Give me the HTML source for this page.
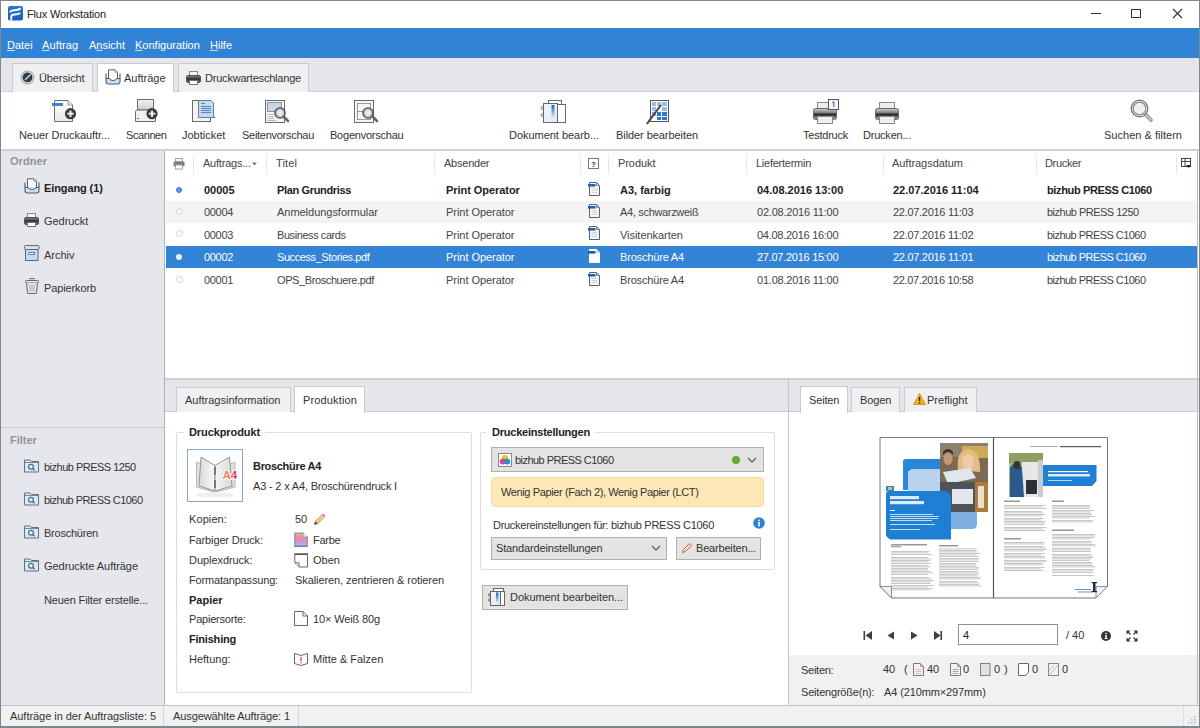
<!DOCTYPE html>
<html><head><meta charset="utf-8">
<style>
*{box-sizing:border-box;margin:0;padding:0}
html,body{width:1200px;height:728px;overflow:hidden;background:#fff}
body{font-family:"Liberation Sans",sans-serif;font-size:11px;color:#333;position:relative}
.a{position:absolute}
.t{position:absolute;white-space:nowrap;line-height:14px}
u{text-decoration:underline;text-underline-offset:1px;text-decoration-color:rgba(255,255,255,0.75)}
</style></head><body>
<!-- window border -->
<div class="a" style="left:0;top:0;width:1200px;height:728px;border:1px solid #7d8a8a;z-index:50;pointer-events:none"></div>

<!-- title bar -->
<div class="a" style="left:0;top:0;width:1200px;height:28px;background:#fff"></div>
<svg class="a" style="left:8px;top:6px" width="15" height="15" viewBox="0 0 15 15"><defs><linearGradient id="lg" x1="0" y1="0" x2="0" y2="1"><stop offset="0" stop-color="#2a78d2"/><stop offset="1" stop-color="#1a5cb4"/></linearGradient></defs><rect x="0" y="0" width="15" height="14.5" rx="2" fill="url(#lg)"/><path d="M2 6.3 Q3 4.2 6 4.3 Q9.5 4.5 12.8 2.4" stroke="#fff" stroke-width="1.9" fill="none"/><path d="M3.3 14.5 V10.5 Q3.6 8.4 6.6 8.5 Q9.8 8.6 12.3 7" stroke="#fff" stroke-width="1.9" fill="none"/></svg>
<div class="t" style="left:27px;top:7px;font-size:11px;color:#222;letter-spacing:-0.17px">Flux Workstation</div>
<div class="a" style="left:1091px;top:13px;width:10px;height:1px;background:#333"></div>
<div class="a" style="left:1131px;top:9px;width:10px;height:9px;border:1px solid #333"></div>
<svg class="a" style="left:1172px;top:8px" width="11" height="11"><path d="M1 1L10 10M10 1L1 10" stroke="#333" stroke-width="1.1"/></svg>

<!-- menu bar -->
<div class="a" style="left:0;top:28px;width:1200px;height:30px;background:#3183d5"></div>
<div class="t" style="left:7px;top:38px;font-size:11px;color:#fff;letter-spacing:-0.021px"><u>D</u>atei</div>
<div class="t" style="left:42px;top:38px;font-size:11px;color:#fff;letter-spacing:0.117px"><u>A</u>uftrag</div>
<div class="t" style="left:89px;top:38px;font-size:11px;color:#fff;letter-spacing:-0.013px">A<u>n</u>sicht</div>
<div class="t" style="left:135px;top:38px;font-size:11px;color:#fff"><u>K</u>onfiguration</div>
<div class="t" style="left:210px;top:38px;font-size:11px;color:#fff"><u>H</u>ilfe</div>

<!-- tab strip -->
<div class="a" style="left:0;top:58px;width:1200px;height:34px;background:#e5e6ea;border-bottom:1px solid #cfd1d6"></div>

<!-- top tabs -->
<div class="a" style="left:12px;top:63px;width:81px;height:29px;background:#f0f0f2;border:1px solid #c9cbd0;border-bottom:none"></div>
<div class="a" style="left:97px;top:63px;width:77px;height:30px;background:#fff;border:1px solid #c9cbd0;border-bottom:none"></div>
<div class="a" style="left:178px;top:63px;width:131px;height:29px;background:#f0f0f2;border:1px solid #c9cbd0;border-bottom:none"></div>
<svg class="a" style="left:20px;top:70px" width="15" height="15" viewBox="0 0 15 15"><circle cx="7.5" cy="7.5" r="7" fill="#a3a7ac"/><circle cx="7.5" cy="7.5" r="6" fill="#e9eaec"/><circle cx="7.5" cy="7.5" r="5" fill="#323c46"/><path d="M5.5 9.5 L10 5" stroke="#c9d3dc" stroke-width="1.5" stroke-linecap="round"/></svg>
<div class="t" style="left:39px;top:71px;color:#333;letter-spacing:-0.108px">Übersicht</div>
<svg class="a" style="left:105px;top:69px" width="16" height="16" viewBox="0 0 16 16"><path d="M1.5 9.5 H4.5 Q5 11.5 8 11.5 Q11 11.5 11.5 9.5 H14.5 V12.5 Q14.5 14.5 12.5 14.5 H3.5 Q1.5 14.5 1.5 12.5Z" fill="#c6def2"/><path d="M3.5 9.5 V0.8 H10 L12.5 3.3 V9.5" fill="#fafafa" stroke="#56606b"/><path d="M10 0.8 V3.3 H12.5" fill="none" stroke="#8a939c" stroke-width="0.8"/><path d="M1 4.5 V12.5 Q1 15 3.5 15 H12.5 Q15 15 15 12.5 V4.5" fill="none" stroke="#4f5a66" stroke-width="1.1"/><path d="M1 9.5 H4.5 Q5 11.5 8 11.5 Q11 11.5 11.5 9.5 H15" fill="none" stroke="#4f5a66"/></svg>
<div class="t" style="left:124px;top:71px;color:#333;letter-spacing:-0.012px">Aufträge</div>
<svg class="a" style="left:186px;top:71px" width="15" height="14" viewBox="0 0 15 14"><rect x="3.5" y="0.5" width="8" height="5" fill="#f4f4f4" stroke="#8a8a8a"/><rect x="0.5" y="4.5" width="14" height="7" rx="1.5" fill="url(#pb)" stroke="#555"/><rect x="3.5" y="9.5" width="8" height="4" fill="#fff" stroke="#777"/></svg>
<div class="t" style="left:205px;top:71px;color:#333;letter-spacing:-0.203px">Druckwarteschlange</div>

<!-- toolbar -->
<div class="a" style="left:0;top:92px;width:1200px;height:57px;background:#fff"></div>
<div class="a" style="left:0;top:149px;width:1200px;height:2px;background:#cdd0d5"></div>
<div class="t" style="left:19px;top:128px;color:#333;letter-spacing:-0.07px">Neuer Druckauftr...</div>
<div class="t" style="left:126px;top:128px;color:#333;letter-spacing:-0.42px">Scannen</div>
<div class="t" style="left:182px;top:128px;color:#333">Jobticket</div>
<div class="t" style="left:242px;top:128px;color:#333;letter-spacing:-0.273px">Seitenvorschau</div>
<div class="t" style="left:330px;top:128px;color:#333;letter-spacing:-0.227px">Bogenvorschau</div>
<div class="t" style="left:509px;top:128px;color:#333;letter-spacing:-0.029px">Dokument bearb...</div>
<div class="t" style="left:616px;top:128px;color:#333;letter-spacing:-0.069px">Bilder bearbeiten</div>
<div class="t" style="left:803px;top:128px;color:#333;letter-spacing:-0.231px">Testdruck</div>
<div class="t" style="left:863px;top:128px;color:#333;letter-spacing:-0.214px">Drucken...</div>
<div class="t" style="left:1104px;top:128px;color:#333;letter-spacing:0.021px">Suchen &amp; filtern</div>

<!-- toolbar icons -->
<svg class="a" style="left:50px;top:98px" width="28" height="26" viewBox="0 0 28 26">
<defs><linearGradient id="gd" x1="0" y1="0" x2="0" y2="1"><stop offset="0" stop-color="#fff"/><stop offset="1" stop-color="#e8e8e8"/></linearGradient></defs>
<path d="M4.5 2.5 H18 L22.5 7 V23.5 H4.5 Z" fill="url(#gd)" stroke="#6b6b6b"/>
<path d="M18 2.5 V7 H22.5" fill="#eee" stroke="#999"/>
<rect x="2" y="5" width="11" height="3" fill="#3a86d4"/>
<circle cx="20.5" cy="15.7" r="5.6" fill="#3d3d3d"/>
<path d="M20.5 12.5 V19 M17.3 15.7 H23.7" stroke="#fff" stroke-width="1.8"/>
</svg>
<svg class="a" style="left:134px;top:98px" width="26" height="26" viewBox="0 0 26 26">
<defs><linearGradient id="gs" x1="0" y1="0" x2="0" y2="1"><stop offset="0" stop-color="#f4f4f4"/><stop offset="1" stop-color="#c9ccd0"/></linearGradient></defs>
<path d="M3.5 1.5 H19.5 V12 H3.5 Z" fill="url(#gs)" stroke="#6b6b6b"/>
<path d="M1.5 13.5 Q1.5 12 3 12 H20 Q21.5 12 21.5 13.5 V23.5 H1.5 Z" fill="#f2f2f2" stroke="#6b6b6b"/>
<rect x="3" y="20" width="2" height="1" fill="#666"/>
<circle cx="18" cy="15.7" r="5.6" fill="#3d3d3d"/>
<path d="M18 12.5 V19 M14.8 15.7 H21.2" stroke="#fff" stroke-width="1.8"/>
</svg>
<svg class="a" style="left:190px;top:98px" width="27" height="26" viewBox="0 0 27 26">
<rect x="2.5" y="2.5" width="18" height="21" fill="#f4f4f4" stroke="#6b6b6b"/>
<path d="M8.5 2.5 H21 L23.5 5 V18 L25 19.5 H8.5 Z" fill="#c4daf0" stroke="#6b7d90"/>
<path d="M11 5.5 H15 M11 8.5 H21 M11 10.5 H21 M11 12.5 H21 M11 14.5 H21" stroke="#3d6fae" stroke-width="0.8"/>
</svg>
<svg class="a" style="left:264px;top:98px" width="26" height="26" viewBox="0 0 26 26">
<rect x="1.5" y="2.5" width="19" height="22" fill="#f6f6f6" stroke="#6b6b6b"/>
<rect x="3.5" y="4.5" width="14" height="9" fill="#c8d6e6" stroke="#8a9099"/>
<path d="M3.5 16.5 H10 M3.5 18.5 H10 M3.5 20.5 H10 M3.5 22.5 H12" stroke="#aaa" stroke-width="0.8"/>
<line x1="19" y1="18" x2="24" y2="23" stroke="#666" stroke-width="2.6" stroke-linecap="round"/>
<circle cx="16" cy="15" r="5" fill="#e9eef3" stroke="#555" stroke-width="1.6"/><circle cx="16" cy="15" r="3.3" fill="none" stroke="#aab" stroke-width="0.8"/>
</svg>
<svg class="a" style="left:353px;top:98px" width="26" height="26" viewBox="0 0 26 26">
<rect x="1.5" y="2.5" width="19" height="22" fill="#f6f6f6" stroke="#6b6b6b"/>
<rect x="4.5" y="5.5" width="13" height="16" fill="none" stroke="#999"/>
<line x1="4.5" y1="13.5" x2="17.5" y2="13.5" stroke="#999"/>
<line x1="19" y1="18" x2="24" y2="23" stroke="#666" stroke-width="2.6" stroke-linecap="round"/>
<circle cx="15" cy="15" r="5" fill="#e9eef3" stroke="#555" stroke-width="1.6"/><circle cx="15" cy="15" r="3.3" fill="none" stroke="#aab" stroke-width="0.8"/>
</svg>
<svg class="a" style="left:538px;top:98px" width="30" height="26" viewBox="0 0 30 26"><rect x="10.5" y="2.5" width="13" height="18" fill="#fff" stroke="#666"/><rect x="19.5" y="6.5" width="8" height="18" fill="#fff" stroke="#666"/><rect x="5.5" y="5.5" width="14" height="19" fill="url(#dpg)" stroke="#666"/><path d="M5.5 8.5 Q3 8.5 3 10 Q3 11.5 5.5 11.5 M5.5 15.5 Q3 15.5 3 17 Q3 18.5 5.5 18.5" fill="none" stroke="#777"/><rect x="13.5" y="7" width="3" height="12" fill="url(#dbg)"/></svg>
<svg class="a" style="left:644px;top:98px" width="28" height="28" viewBox="0 0 28 28">
<rect x="6.5" y="2.5" width="18" height="21" fill="#fff" stroke="#555"/>
<g fill="#9bbce0"><rect x="8" y="4" width="4" height="4"/><rect x="13" y="4" width="4" height="4"/><rect x="18" y="4" width="5" height="4"/><rect x="8" y="9" width="4" height="4"/><rect x="18" y="9" width="5" height="4"/></g>
<g fill="#2f78d0"><rect x="13" y="14" width="4" height="4"/><rect x="18" y="14" width="5" height="4"/><rect x="13" y="19" width="4" height="3"/><rect x="18" y="19" width="5" height="3"/><rect x="8" y="14" width="4" height="4" fill="#7aa6d8"/></g>
<path d="M3 26 L5 23 L17 7" stroke="#444" stroke-width="2" fill="none"/>
</svg>
<svg class="a" style="left:812px;top:98px" width="28" height="27" viewBox="0 0 28 27">
<defs><linearGradient id="gp" x1="0" y1="0" x2="0" y2="1"><stop offset="0" stop-color="#d0d0d0"/><stop offset="0.35" stop-color="#8a8a8a"/><stop offset="0.55" stop-color="#262626"/><stop offset="0.75" stop-color="#6a6a6a"/><stop offset="1" stop-color="#b0b0b0"/></linearGradient></defs>
<rect x="5.5" y="4.5" width="15" height="8" fill="#eee" stroke="#888"/>
<rect x="1.5" y="10.5" width="23" height="11" rx="2" fill="url(#gp)" stroke="#666"/>
<rect x="5.5" y="18.5" width="15" height="7" fill="#eee" stroke="#888"/>
<rect x="16.5" y="1.5" width="10" height="10" fill="#f3f7fb" stroke="#555"/>
<path d="M20.3 4.6 L21.8 3.6 V9.2" stroke="#2d5f9a" stroke-width="1" fill="none"/>
</svg>
<svg class="a" style="left:874px;top:98px" width="28" height="27" viewBox="0 0 28 27">
<rect x="5.5" y="4.5" width="15" height="8" fill="#eee" stroke="#888"/>
<rect x="1.5" y="10.5" width="23" height="11" rx="2" fill="url(#gp)" stroke="#666"/>
<rect x="5.5" y="18.5" width="15" height="7" fill="#eee" stroke="#888"/>
</svg>
<svg class="a" style="left:1128px;top:96px" width="26" height="28" viewBox="0 0 26 28">
<line x1="16.5" y1="17.5" x2="23" y2="24" stroke="#777" stroke-width="3.4" stroke-linecap="round"/>
<line x1="16.5" y1="17.5" x2="23" y2="24" stroke="#d9e1ea" stroke-width="1.6" stroke-linecap="round"/>
<circle cx="11.5" cy="12.5" r="8.3" fill="#f1f4f8" stroke="#777" stroke-width="1.3"/>
<circle cx="11.5" cy="12.5" r="6.3" fill="#eef2f6" stroke="#888" stroke-width="1.2"/>
</svg>

<!-- sidebar -->
<div class="a" style="left:0;top:151px;width:165px;height:554px;background:#e6e7ec;border-right:1px solid #aeb2b9"></div>
<div class="a" style="left:0;top:427px;width:164px;height:1px;background:#c5c8ce"></div>
<div class="t" style="left:10px;top:154px;color:#8f959e;font-weight:bold;letter-spacing:0.052px">Ordner</div>
<svg class="a" style="left:24px;top:178px" width="16" height="16" viewBox="0 0 16 16"><path d="M1.5 9.5 H4.5 Q5 11.5 8 11.5 Q11 11.5 11.5 9.5 H14.5 V12.5 Q14.5 14.5 12.5 14.5 H3.5 Q1.5 14.5 1.5 12.5Z" fill="#c6def2"/><path d="M3.5 9.5 V0.8 H10 L12.5 3.3 V9.5" fill="#fafafa" stroke="#56606b"/><path d="M10 0.8 V3.3 H12.5" fill="none" stroke="#8a939c" stroke-width="0.8"/><path d="M1 4.5 V12.5 Q1 15 3.5 15 H12.5 Q15 15 15 12.5 V4.5" fill="none" stroke="#4f5a66" stroke-width="1.1"/><path d="M1 9.5 H4.5 Q5 11.5 8 11.5 Q11 11.5 11.5 9.5 H15" fill="none" stroke="#4f5a66"/></svg>
<div class="t" style="left:44px;top:181px;color:#222;font-weight:bold;letter-spacing:-0.108px">Eingang (1)</div>
<svg class="a" style="left:24px;top:213px" width="15" height="14" viewBox="0 0 15 14"><defs><linearGradient id="pb" x1="0" y1="0" x2="0" y2="1"><stop offset="0" stop-color="#8d9196"/><stop offset="0.5" stop-color="#2e3135"/><stop offset="1" stop-color="#6a6e73"/></linearGradient></defs><rect x="3.5" y="0.5" width="8" height="5" fill="#f4f4f4" stroke="#8a8a8a"/><rect x="0.5" y="4.5" width="14" height="7" rx="1.5" fill="url(#pb)" stroke="#555"/><rect x="3.5" y="9.5" width="8" height="4" fill="#fff" stroke="#777"/></svg>
<div class="t" style="left:44px;top:214px;color:#333;letter-spacing:-0.043px">Gedruckt</div>
<svg class="a" style="left:24px;top:245px" width="16" height="16" viewBox="0 0 16 16"><rect x="0.5" y="0.5" width="14.5" height="4" rx="1" fill="#d8e2ec" stroke="#5f6a76"/><rect x="1.5" y="4.5" width="12.5" height="11" fill="#c3dbf0" stroke="#5f6a76"/><rect x="5" y="7.5" width="5.5" height="2" fill="#eaf3fb" stroke="#6a7e94"/></svg>
<div class="t" style="left:44px;top:248px;color:#333;letter-spacing:-0.01px">Archiv</div>
<svg class="a" style="left:25px;top:278px" width="14" height="16" viewBox="0 0 14 16"><rect x="5" y="0.5" width="4" height="2" fill="#ddd" stroke="#6a6a6a"/><rect x="0.5" y="2.5" width="13" height="2.5" rx="1" fill="#e6e6e6" stroke="#6a6a6a"/><path d="M1.5 5 L2.5 15.5 H11.5 L12.5 5" fill="#e0e0e0" stroke="#6a6a6a"/><path d="M5 7 V13.5 M7 7 V13.5 M9 7 V13.5" stroke="#aaa" stroke-width="0.8"/></svg>
<div class="t" style="left:44px;top:281px;color:#333;letter-spacing:-0.12px">Papierkorb</div>
<div class="t" style="left:10px;top:433px;color:#8f959e;font-weight:bold">Filter</div>
<svg class="a" style="left:24px;top:459px" width="15" height="14" viewBox="0 0 15 14"><path d="M0.5 1 H6 L7.5 2.5 H14.5 V13 H0.5 Z" fill="#d8e8f5" stroke="#65707b"/><path d="M0.5 3.5 H14.5" stroke="#65707b" stroke-width="0.8"/><circle cx="7" cy="7.8" r="2.4" fill="#eef6fd" stroke="#4b6a8a" stroke-width="1.2"/><line x1="8.8" y1="9.6" x2="10.6" y2="11.2" stroke="#4b6a8a" stroke-width="1.4"/></svg>
<div class="t" style="left:44px;top:460px;color:#333;letter-spacing:-0.506px">bizhub PRESS 1250</div>
<svg class="a" style="left:24px;top:492px" width="15" height="14" viewBox="0 0 15 14"><path d="M0.5 1 H6 L7.5 2.5 H14.5 V13 H0.5 Z" fill="#d8e8f5" stroke="#65707b"/><path d="M0.5 3.5 H14.5" stroke="#65707b" stroke-width="0.8"/><circle cx="7" cy="7.8" r="2.4" fill="#eef6fd" stroke="#4b6a8a" stroke-width="1.2"/><line x1="8.8" y1="9.6" x2="10.6" y2="11.2" stroke="#4b6a8a" stroke-width="1.4"/></svg>
<div class="t" style="left:44px;top:493px;color:#333;letter-spacing:-0.541px">bizhub PRESS C1060</div>
<svg class="a" style="left:24px;top:525px" width="15" height="14" viewBox="0 0 15 14"><path d="M0.5 1 H6 L7.5 2.5 H14.5 V13 H0.5 Z" fill="#d8e8f5" stroke="#65707b"/><path d="M0.5 3.5 H14.5" stroke="#65707b" stroke-width="0.8"/><circle cx="7" cy="7.8" r="2.4" fill="#eef6fd" stroke="#4b6a8a" stroke-width="1.2"/><line x1="8.8" y1="9.6" x2="10.6" y2="11.2" stroke="#4b6a8a" stroke-width="1.4"/></svg>
<div class="t" style="left:44px;top:526px;color:#333;letter-spacing:-0.227px">Broschüren</div>
<svg class="a" style="left:24px;top:558px" width="15" height="14" viewBox="0 0 15 14"><path d="M0.5 1 H6 L7.5 2.5 H14.5 V13 H0.5 Z" fill="#d8e8f5" stroke="#65707b"/><path d="M0.5 3.5 H14.5" stroke="#65707b" stroke-width="0.8"/><circle cx="7" cy="7.8" r="2.4" fill="#eef6fd" stroke="#4b6a8a" stroke-width="1.2"/><line x1="8.8" y1="9.6" x2="10.6" y2="11.2" stroke="#4b6a8a" stroke-width="1.4"/></svg>
<div class="t" style="left:44px;top:559px;color:#333;letter-spacing:-0.043px">Gedruckte Aufträge</div>
<div class="t" style="left:44px;top:593px;color:#333;letter-spacing:-0.15px">Neuen Filter erstelle...</div>

<!-- table -->
<div class="a" style="left:165px;top:151px;width:1035px;height:227px;background:#fff"></div>
<div class="a" style="left:193px;top:152px;width:1px;height:25px;background:linear-gradient(#fff,#e3e5e8 30%,#e3e5e8 70%,#fff)"></div>
<div class="a" style="left:266px;top:152px;width:1px;height:25px;background:linear-gradient(#fff,#e3e5e8 30%,#e3e5e8 70%,#fff)"></div>
<div class="a" style="left:434px;top:152px;width:1px;height:25px;background:linear-gradient(#fff,#e3e5e8 30%,#e3e5e8 70%,#fff)"></div>
<div class="a" style="left:580px;top:152px;width:1px;height:25px;background:linear-gradient(#fff,#e3e5e8 30%,#e3e5e8 70%,#fff)"></div>
<div class="a" style="left:608px;top:152px;width:1px;height:25px;background:linear-gradient(#fff,#e3e5e8 30%,#e3e5e8 70%,#fff)"></div>
<div class="a" style="left:746px;top:152px;width:1px;height:25px;background:linear-gradient(#fff,#e3e5e8 30%,#e3e5e8 70%,#fff)"></div>
<div class="a" style="left:883px;top:152px;width:1px;height:25px;background:linear-gradient(#fff,#e3e5e8 30%,#e3e5e8 70%,#fff)"></div>
<div class="a" style="left:1036px;top:152px;width:1px;height:25px;background:linear-gradient(#fff,#e3e5e8 30%,#e3e5e8 70%,#fff)"></div>
<div class="a" style="left:1176px;top:152px;width:1px;height:25px;background:linear-gradient(#fff,#e3e5e8 30%,#e3e5e8 70%,#fff)"></div>
<svg class="a" style="left:173px;top:158px" width="12" height="12" viewBox="0 0 12 12"><rect x="2.5" y="0.5" width="7" height="3.5" fill="#f2f2f2" stroke="#a5a5a5"/><rect x="0.5" y="3.5" width="11" height="5" rx="1.2" fill="#7d7d7d"/><rect x="2.5" y="7" width="7" height="4" fill="#fff" stroke="#a5a5a5"/></svg>
<div class="t" style="left:203px;top:156px;color:#444;letter-spacing:-0.217px">Auftrags...</div>
<svg class="a" style="left:252px;top:162px" width="5" height="4"><path d="M0 0.5H5L2.5 3.5Z" fill="#777"/></svg>
<div class="t" style="left:276px;top:156px;color:#444;letter-spacing:0.125px">Titel</div>
<div class="t" style="left:444px;top:156px;color:#444;letter-spacing:-0.23px">Absender</div>
<svg class="a" style="left:588px;top:158px" width="12" height="12" viewBox="0 0 12 12"><rect x="0.5" y="0.5" width="10" height="10" fill="#fff" stroke="#777"/><text x="5.5" y="8.5" font-size="8" font-weight="bold" text-anchor="middle" fill="#333" font-family="Liberation Sans">?</text></svg>
<div class="t" style="left:618px;top:156px;color:#444;letter-spacing:-0.075px">Produkt</div>
<div class="t" style="left:756px;top:156px;color:#444;letter-spacing:-0.257px">Liefertermin</div>
<div class="t" style="left:892px;top:156px;color:#444;letter-spacing:-0.042px">Auftragsdatum</div>
<div class="t" style="left:1045px;top:156px;color:#444;letter-spacing:-0.331px">Drucker</div>
<svg class="a" style="left:1181px;top:158px" width="11" height="11" viewBox="0 0 11 11"><rect x="0.5" y="0.5" width="9" height="8" fill="#fff" stroke="#444"/><path d="M0.5 3.5H9.5M4 0.5V8.5" stroke="#444"/><path d="M5 7 H10 L7.5 10Z" fill="#222"/></svg>
<div class="a" style="left:166px;top:201px;width:1031px;height:22px;background:#f4f4f5"></div>
<div class="a" style="left:166px;top:246px;width:1031px;height:22px;background:#3383d6"></div>
<div class="a" style="left:176px;top:187px;width:6px;height:6px;border-radius:50%;background:#5b9be0;border:1px solid #3a78c0"></div>
<svg class="a" style="left:588px;top:182px" width="13" height="15" viewBox="0 0 13 15"><path d="M1.5 0.5H8.5L11.5 3.5V13.5H1.5Z" fill="#f7f8fa" stroke="#59616b"/><path d="M8.5 0.5V3.5H11.5" fill="none" stroke="#888"/><rect x="0" y="2" width="7.5" height="2.6" fill="#1f63b8"/><path d="M3.5 6.5H9.5M3.5 8.5H9.5M3.5 10.5H9.5" stroke="#c8c8c8" stroke-width="0.8"/></svg>
<div class="t" style="left:204px;top:182.5px;color:#222;font-weight:bold">00005</div>
<div class="t" style="left:277px;top:182.5px;color:#222;font-weight:bold;letter-spacing:-0.347px">Plan Grundriss</div>
<div class="t" style="left:446px;top:182.5px;color:#222;font-weight:bold;letter-spacing:-0.056px">Print Operator</div>
<div class="t" style="left:620px;top:182.5px;color:#222;font-weight:bold">A3, farbig</div>
<div class="t" style="left:757px;top:182.5px;color:#222;font-weight:bold">04.08.2016 13:00</div>
<div class="t" style="left:893px;top:182.5px;color:#222;font-weight:bold">22.07.2016 11:04</div>
<div class="t" style="left:1047px;top:182.5px;color:#222;font-weight:bold;letter-spacing:-0.362px">bizhub PRESS C1060</div>
<div class="a" style="left:176px;top:208px;width:7px;height:7px;border-radius:50%;border:1.5px solid #d4d4d4"></div>
<svg class="a" style="left:588px;top:204px" width="13" height="15" viewBox="0 0 13 15"><path d="M1.5 0.5H8.5L11.5 3.5V13.5H1.5Z" fill="#f7f8fa" stroke="#59616b"/><path d="M8.5 0.5V3.5H11.5" fill="none" stroke="#888"/><rect x="0" y="2" width="7.5" height="2.6" fill="#1f63b8"/><path d="M3.5 6.5H9.5M3.5 8.5H9.5M3.5 10.5H9.5" stroke="#c8c8c8" stroke-width="0.8"/></svg>
<div class="t" style="left:204px;top:205.0px;color:#444;font-weight:normal;letter-spacing:-0.319px">00004</div>
<div class="t" style="left:277px;top:205.0px;color:#444;font-weight:normal;letter-spacing:-0.028px">Anmeldungsformular</div>
<div class="t" style="left:446px;top:205.0px;color:#444;font-weight:normal;letter-spacing:-0.042px">Print Operator</div>
<div class="t" style="left:620px;top:205.0px;color:#444;font-weight:normal;letter-spacing:-0.323px">A4, schwarzweiß</div>
<div class="t" style="left:757px;top:205.0px;color:#444;font-weight:normal;letter-spacing:-0.221px">02.08.2016 11:00</div>
<div class="t" style="left:893px;top:205.0px;color:#444;font-weight:normal;letter-spacing:-0.286px">22.07.2016 11:03</div>
<div class="t" style="left:1047px;top:205.0px;color:#444;font-weight:normal;letter-spacing:-0.506px">bizhub PRESS 1250</div>
<div class="a" style="left:176px;top:230px;width:7px;height:7px;border-radius:50%;border:1.5px solid #d4d4d4"></div>
<svg class="a" style="left:588px;top:226px" width="13" height="15" viewBox="0 0 13 15"><path d="M1.5 0.5H8.5L11.5 3.5V13.5H1.5Z" fill="#f7f8fa" stroke="#59616b"/><path d="M8.5 0.5V3.5H11.5" fill="none" stroke="#888"/><rect x="0" y="2" width="7.5" height="2.6" fill="#1f63b8"/><path d="M3.5 6.5H9.5M3.5 8.5H9.5M3.5 10.5H9.5" stroke="#c8c8c8" stroke-width="0.8"/></svg>
<div class="t" style="left:204px;top:227.5px;color:#444;font-weight:normal;letter-spacing:-0.319px">00003</div>
<div class="t" style="left:277px;top:227.5px;color:#444;font-weight:normal;letter-spacing:-0.428px">Business cards</div>
<div class="t" style="left:446px;top:227.5px;color:#444;font-weight:normal;letter-spacing:-0.042px">Print Operator</div>
<div class="t" style="left:620px;top:227.5px;color:#444;font-weight:normal;letter-spacing:-0.038px">Visitenkarten</div>
<div class="t" style="left:757px;top:227.5px;color:#444;font-weight:normal;letter-spacing:-0.271px">04.08.2016 16:00</div>
<div class="t" style="left:893px;top:227.5px;color:#444;font-weight:normal;letter-spacing:-0.286px">22.07.2016 11:02</div>
<div class="t" style="left:1047px;top:227.5px;color:#444;font-weight:normal;letter-spacing:-0.541px">bizhub PRESS C1060</div>
<div class="a" style="left:176px;top:254px;width:6px;height:6px;border-radius:50%;background:#e3f1ff"></div>
<svg class="a" style="left:588px;top:249px" width="13" height="15" viewBox="0 0 13 15"><path d="M1.5 0.5H8.5L11.5 3.5V13.5H1.5Z" fill="#fff" stroke="#fff"/><path d="M8.5 0.5V3.5H11.5" fill="none" stroke="#bcd"/><rect x="0" y="2" width="7.5" height="2.6" fill="#1c5fb0"/></svg>
<div class="t" style="left:204px;top:250.0px;color:#fff;font-weight:normal;letter-spacing:-0.319px">00002</div>
<div class="t" style="left:277px;top:250.0px;color:#fff;font-weight:normal;letter-spacing:-0.415px">Success_Stories.pdf</div>
<div class="t" style="left:446px;top:250.0px;color:#fff;font-weight:normal;letter-spacing:-0.042px">Print Operator</div>
<div class="t" style="left:620px;top:250.0px;color:#fff;font-weight:normal;letter-spacing:-0.171px">Broschüre A4</div>
<div class="t" style="left:757px;top:250.0px;color:#fff;font-weight:normal;letter-spacing:-0.271px">27.07.2016 15:00</div>
<div class="t" style="left:893px;top:250.0px;color:#fff;font-weight:normal;letter-spacing:-0.286px">22.07.2016 11:01</div>
<div class="t" style="left:1047px;top:250.0px;color:#fff;font-weight:normal;letter-spacing:-0.541px">bizhub PRESS C1060</div>
<div class="a" style="left:176px;top:276px;width:7px;height:7px;border-radius:50%;border:1.5px solid #d4d4d4"></div>
<svg class="a" style="left:588px;top:272px" width="13" height="15" viewBox="0 0 13 15"><path d="M1.5 0.5H8.5L11.5 3.5V13.5H1.5Z" fill="#f7f8fa" stroke="#59616b"/><path d="M8.5 0.5V3.5H11.5" fill="none" stroke="#888"/><rect x="0" y="2" width="7.5" height="2.6" fill="#1f63b8"/><path d="M3.5 6.5H9.5M3.5 8.5H9.5M3.5 10.5H9.5" stroke="#c8c8c8" stroke-width="0.8"/></svg>
<div class="t" style="left:204px;top:272.5px;color:#444;font-weight:normal;letter-spacing:-0.319px">00001</div>
<div class="t" style="left:277px;top:272.5px;color:#444;font-weight:normal;letter-spacing:-0.397px">OPS_Broschuere.pdf</div>
<div class="t" style="left:446px;top:272.5px;color:#444;font-weight:normal;letter-spacing:-0.042px">Print Operator</div>
<div class="t" style="left:620px;top:272.5px;color:#444;font-weight:normal;letter-spacing:-0.171px">Broschüre A4</div>
<div class="t" style="left:757px;top:272.5px;color:#444;font-weight:normal;letter-spacing:-0.221px">01.08.2016 11:00</div>
<div class="t" style="left:893px;top:272.5px;color:#444;font-weight:normal;letter-spacing:-0.337px">22.07.2016 10:58</div>
<div class="t" style="left:1047px;top:272.5px;color:#444;font-weight:normal;letter-spacing:-0.541px">bizhub PRESS C1060</div>

<!-- lower panel -->
<div class="a" style="left:165px;top:378px;width:1035px;height:327px;background:#fff"></div>
<div class="a" style="left:165px;top:378px;width:1035px;height:2px;background:#cdd0d5"></div>
<div class="a" style="left:165px;top:380px;width:1035px;height:32px;background:#e5e6ea;border-bottom:1px solid #c9ccd1"></div>
<div class="a" style="left:788px;top:378px;width:1px;height:327px;background:#c2c6cc"></div>
<div class="a" style="left:176px;top:387px;width:115px;height:25px;background:#f0f0f2;border:1px solid #c9cbd0;border-bottom:none"></div>
<div class="a" style="left:294px;top:386px;width:71px;height:27px;background:#fff;border:1px solid #c9cbd0;border-bottom:none"></div>
<div class="t" style="left:185px;top:393px;color:#333">Auftragsinformation</div>
<div class="t" style="left:303px;top:393px;color:#333;letter-spacing:0.141px">Produktion</div>
<div class="a" style="left:800px;top:386px;width:48px;height:27px;background:#fff;border:1px solid #c9cbd0;border-bottom:none"></div>
<div class="a" style="left:851px;top:387px;width:49px;height:25px;background:#f0f0f2;border:1px solid #c9cbd0;border-bottom:none"></div>
<div class="a" style="left:904px;top:387px;width:73px;height:25px;background:#f0f0f2;border:1px solid #c9cbd0;border-bottom:none"></div>
<div class="t" style="left:809px;top:393px;color:#333;letter-spacing:-0.151px">Seiten</div>
<div class="t" style="left:860px;top:393px;color:#333;letter-spacing:-0.102px">Bogen</div>
<svg class="a" style="left:913px;top:393px" width="13" height="12" viewBox="0 0 13 12"><path d="M6.5 0.5 L12.5 11.5 H0.5 Z" fill="#f2b41e" stroke="#c98a00" stroke-width="0.8"/><path d="M6.5 4 V8" stroke="#222" stroke-width="1.4"/><rect x="5.8" y="9" width="1.4" height="1.4" fill="#222"/></svg>
<div class="t" style="left:927px;top:393px;color:#333;letter-spacing:0.027px">Preflight</div>

<!-- Druckprodukt group -->
<div class="a" style="left:176px;top:432px;width:296px;height:261px;border:1px solid #dcdde0;border-radius:2px"></div>
<div class="t" style="left:184px;top:425px;padding:0 5px;background:#fff;color:#222;font-weight:bold;letter-spacing:-0.094px">Druckprodukt</div>
<div class="a" style="left:187px;top:449px;width:56px;height:53px;border:1.5px solid #86a6cc;background:#fff"></div>
<svg class="a" style="left:187px;top:449px" width="56" height="53" viewBox="187 449 56 53">
<defs><linearGradient id="a4g" x1="0" y1="0" x2="1" y2="0"><stop offset="0" stop-color="#f0a050"/><stop offset="1" stop-color="#d0206a"/></linearGradient>
<linearGradient id="pgl" x1="0" y1="0" x2="1" y2="0"><stop offset="0" stop-color="#d8d8d8"/><stop offset="1" stop-color="#fafafa"/></linearGradient>
<linearGradient id="pgr" x1="0" y1="0" x2="1" y2="0"><stop offset="0" stop-color="#f4f4f4"/><stop offset="1" stop-color="#dcdcdc"/></linearGradient></defs>
<path d="M196.5 462 L214 470 L214 492 L196.5 487 Z" fill="#e2e2e2" stroke="#a8a8a8" stroke-width="0.8"/>
<path d="M235 462 L216 470 L216 492 L235 487 Z" fill="#e2e2e2" stroke="#a8a8a8" stroke-width="0.8"/>
<path d="M201 457 L215 465.5 L215 491 L199 486 Z" fill="url(#pgl)" stroke="#8c8c8c" stroke-width="0.9"/>
<path d="M229.5 457 L215 465.5 L215 491 L232 486 Z" fill="url(#pgr)" stroke="#8c8c8c" stroke-width="0.9"/>
<path d="M215 467 V475 M215 480 V488" stroke="#555" stroke-width="1.3"/>
<ellipse cx="215" cy="495" rx="19" ry="2.5" fill="#eeeeee"/>
<text x="222.5" y="479" font-family="Liberation Sans" font-weight="bold" font-size="11.5" fill="url(#a4g)" stroke="#fff" stroke-width="2" paint-order="stroke">A4</text>
</svg>
<div class="t" style="left:253px;top:459px;color:#222;font-weight:bold;letter-spacing:-0.311px">Broschüre A4</div>
<div class="t" style="left:253px;top:479px;color:#333;letter-spacing:-0.173px">A3 - 2 x A4, Broschürendruck I</div>
<div class="t" style="left:189px;top:512px;color:#333;font-weight:normal;letter-spacing:0.098px">Kopien:</div>
<div class="t" style="left:189px;top:533px;color:#333;font-weight:normal;letter-spacing:-0.133px">Farbiger Druck:</div>
<div class="t" style="left:189px;top:553px;color:#333;font-weight:normal;letter-spacing:-0.059px">Duplexdruck:</div>
<div class="t" style="left:189px;top:573px;color:#333;font-weight:normal;letter-spacing:-0.17px">Formatanpassung:</div>
<div class="t" style="left:189px;top:593px;color:#222;font-weight:bold">Papier</div>
<div class="t" style="left:189px;top:612px;color:#333;font-weight:normal;letter-spacing:-0.209px">Papiersorte:</div>
<div class="t" style="left:189px;top:632px;color:#222;font-weight:bold;letter-spacing:-0.21px">Finishing</div>
<div class="t" style="left:189px;top:652px;color:#333;font-weight:normal">Heftung:</div>

<div class="t" style="left:295px;top:512px;color:#333">50</div>
<svg class="a" style="left:313px;top:513px" width="13" height="13" viewBox="0 0 13 13"><path d="M1.5 11.5 L2.3 8.3 L9 1.6 L11.4 4 L4.7 10.7 Z" fill="#f0c890" stroke="#b88a50" stroke-width="0.8"/><path d="M9 1.6 L11.4 4 L12.2 3.2 Q12.6 2.6 12 2 L11 1 Q10.4 0.4 9.8 0.8 Z" fill="#e97aa0"/><path d="M1.5 11.5 L2.3 8.3 L4.7 10.7 Z" fill="#444"/></svg>
<svg class="a" style="left:294px;top:532px" width="15" height="16" viewBox="0 0 15 16"><defs><linearGradient id="rb2" x1="0" y1="0" x2="0" y2="1"><stop offset="0" stop-color="#f5b27a"/><stop offset="0.4" stop-color="#ee88a8"/><stop offset="0.7" stop-color="#c89ad8"/><stop offset="1" stop-color="#9ec4ea"/></linearGradient></defs><path d="M0.8 1 H9 L13.2 5 V14.5 H0.8 Z" fill="url(#rb2)" stroke="#7d8fa3" stroke-width="1.1"/><path d="M9 1 V5 H13.2" fill="#fff" stroke="#7d8fa3" stroke-width="0.9"/><rect x="0.8" y="13.5" width="12.4" height="1.3" fill="#6d8198"/></svg>
<div class="t" style="left:313px;top:533px;color:#333;letter-spacing:-0.25px">Farbe</div>
<svg class="a" style="left:294px;top:553px" width="15" height="15" viewBox="0 0 15 15"><path d="M0.8 1 H13.5 V14 H5 L0.8 9.8 Z" fill="#fff" stroke="#666" stroke-width="1"/><rect x="0.5" y="0.5" width="13.5" height="1.5" fill="#555"/><path d="M0.8 9.8 H5 V14" fill="#eee" stroke="#666" stroke-width="0.9"/></svg>
<div class="t" style="left:313px;top:553px;color:#333">Oben</div>
<div class="t" style="left:295px;top:573px;color:#333;letter-spacing:-0.083px">Skalieren, zentrieren &amp; rotieren</div>
<svg class="a" style="left:294px;top:611px" width="14" height="15" viewBox="0 0 14 15"><path d="M0.5 0.5H9L13.5 5V14.5H0.5Z" fill="#fff" stroke="#666"/><path d="M9 0.5V5H13.5" fill="none" stroke="#666"/></svg>
<div class="t" style="left:313px;top:612px;color:#333;letter-spacing:-0.133px">10× Weiß 80g</div>
<svg class="a" style="left:294px;top:652px" width="14" height="14" viewBox="0 0 14 14"><path d="M0.5 1.5 L7 3.5 L13.5 1.5 V11.5 L7 13.5 L0.5 11.5 Z" fill="#fff" stroke="#666"/><path d="M7 5 V9" stroke="#c0392b" stroke-width="1.2"/><rect x="6.4" y="10" width="1.2" height="1.2" fill="#c0392b"/></svg>
<div class="t" style="left:313px;top:652px;color:#333">Mitte &amp; Falzen</div>

<!-- Druckeinstellungen group -->
<div class="a" style="left:480px;top:432px;width:295px;height:138px;border:1px solid #dcdde0;border-radius:2px"></div>
<div class="t" style="left:487px;top:425px;padding:0 5px;background:#fff;color:#222;font-weight:bold;letter-spacing:-0.227px">Druckeinstellungen</div>
<div class="a" style="left:491px;top:447px;width:273px;height:25px;background:#e3e3e3;border:1px solid #b0b0b0"></div>
<svg class="a" style="left:498px;top:453px" width="14" height="14" viewBox="0 0 14 14"><rect x="0.5" y="0.5" width="13" height="13" fill="#fff" stroke="#888"/><circle cx="7" cy="5" r="3" fill="#f5c400"/><circle cx="4.8" cy="8.5" r="3" fill="#e8388a"/><circle cx="9.2" cy="8.5" r="3" fill="#1e90d8"/></svg>
<div class="t" style="left:515px;top:453px;color:#333;letter-spacing:-0.541px">bizhub PRESS C1060</div>
<div class="a" style="left:732px;top:456px;width:8px;height:8px;border-radius:50%;background:#6aa832"></div>
<svg class="a" style="left:747px;top:457px" width="10" height="6"><path d="M1 1 L5 5 L9 1" stroke="#555" fill="none" stroke-width="1.1"/></svg>
<div class="a" style="left:491px;top:477px;width:273px;height:30px;background:#fce8b6;border-radius:3px;border:1px solid #f0dba8"></div>
<div class="t" style="left:501px;top:485px;color:#333;letter-spacing:-0.377px">Wenig Papier (Fach 2), Wenig Papier (LCT)</div>
<div class="t" style="left:493px;top:518px;color:#333;letter-spacing:-0.286px">Druckereinstellungen für: bizhub PRESS C1060</div>
<svg class="a" style="left:753px;top:517px" width="12" height="12" viewBox="0 0 12 12"><circle cx="6" cy="6" r="5.8" fill="#2f7fd3"/><rect x="5.2" y="5" width="1.6" height="4.5" fill="#fff"/><rect x="5.2" y="2.5" width="1.6" height="1.6" fill="#fff"/></svg>
<div class="a" style="left:491px;top:537px;width:176px;height:23px;background:#e3e3e3;border:1px solid #b0b0b0"></div>
<div class="t" style="left:496px;top:541px;color:#333;letter-spacing:-0.142px">Standardeinstellungen</div>
<svg class="a" style="left:651px;top:545px" width="10" height="6"><path d="M1 1 L5 5 L9 1" stroke="#555" fill="none" stroke-width="1.1"/></svg>
<div class="a" style="left:676px;top:537px;width:85px;height:23px;background:#e3e3e3;border:1px solid #b0b0b0"></div>
<svg class="a" style="left:681px;top:542px" width="12" height="12" viewBox="0 0 12 12"><path d="M1.5 10.5 L2.5 7.5 L8.5 1.5 L10.5 3.5 L4.5 9.5 Z" fill="#f6e2cc" stroke="#b5563a" stroke-width="0.9"/></svg>
<div class="t" style="left:696px;top:541px;color:#333;letter-spacing:-0.183px">Bearbeiten...</div>
<div class="a" style="left:482px;top:585px;width:146px;height:25px;background:#e3e3e3;border:1px solid #b0b0b0"></div>
<svg class="a" style="left:486px;top:587px" width="22" height="20" viewBox="0 0 22 20"><defs><linearGradient id="dbg" x1="0" y1="0" x2="0" y2="1"><stop offset="0" stop-color="#1e5fb8"/><stop offset="1" stop-color="#cfe0f3"/></linearGradient><linearGradient id="dpg" x1="0" y1="0" x2="1" y2="1"><stop offset="0" stop-color="#f4f8fc"/><stop offset="1" stop-color="#dfe9f5"/></linearGradient></defs><rect x="7.5" y="1.5" width="10" height="14" fill="#fff" stroke="#666"/><rect x="13.5" y="4.5" width="5" height="14" fill="#fff" stroke="#666"/><rect x="4.5" y="4.5" width="10" height="14" fill="url(#dpg)" stroke="#666"/><path d="M4.5 6.5 Q2.5 6.5 2.5 8 Q2.5 9.5 4.5 9.5 M4.5 11.5 Q2.5 11.5 2.5 13 Q2.5 14.5 4.5 14.5" fill="none" stroke="#666"/><rect x="10" y="5.5" width="2.5" height="10" fill="url(#dbg)"/></svg>
<div class="t" style="left:510px;top:590px;color:#333;letter-spacing:-0.062px">Dokument bearbeiten...</div>

<!-- preview -->
<svg class="a" style="left:878px;top:436px" width="234" height="165" viewBox="878 436 234 165"><path d="M880 437.5 H993.5 V598 H891.5 L880 586.5 Z" fill="#fff" stroke="#777" stroke-width="1"/><path d="M993.5 437.5 H1107.5 V586.5 L1096 598 H993.5 Z" fill="#fff" stroke="#777" stroke-width="1"/><path d="M880 586.5 H891.5 V598 Z" fill="#f0f0f0" stroke="#777" stroke-width="0.8"/><path d="M1107.5 586.5 H1096 V598 Z" fill="#f0f0f0" stroke="#777" stroke-width="0.8"/><line x1="993.5" y1="437.5" x2="993.5" y2="598" stroke="#555" stroke-width="1.2"/><path d="M903 462 Q903 459 906 459 H940 V469 H912 L908 472 V490 H903 Z" fill="#2a86d6"/><path d="M908 472 L912 469 H940 V491 H908 Z" fill="#b9d2ee"/><path d="M950 512 H977 V524 Q977 529 972 529 H950 Z" fill="#7fb0e2"/><defs><linearGradient id="ph1" x1="0" y1="0" x2="1" y2="1"><stop offset="0" stop-color="#6b5a48"/><stop offset="0.35" stop-color="#d9b27a"/><stop offset="0.6" stop-color="#5d6670"/><stop offset="1" stop-color="#c98b3a"/></linearGradient><linearGradient id="ph2" x1="0" y1="0" x2="1" y2="1"><stop offset="0" stop-color="#9aa56a"/><stop offset="0.45" stop-color="#2f5f8f"/><stop offset="0.7" stop-color="#d8d8d0"/><stop offset="1" stop-color="#3a4450"/></linearGradient></defs><path d="M940 443 H982 L988 447 V512 H940 Z" fill="#7d6a52"/>
<rect x="940" y="443" width="48" height="14" fill="#8c8070"/>
<rect x="962" y="446" width="26" height="12" fill="#d0a85a"/>
<ellipse cx="948" cy="459" rx="4.5" ry="6" fill="#c49a7a"/><path d="M943 455 Q948 448 953 455 V452 Q948 446 943 452Z" fill="#3a2a20"/>
<path d="M958 470 Q956 450 968 449 Q981 450 980 472 Z" fill="#e2bd80"/>
<ellipse cx="968" cy="462" rx="6" ry="8" fill="#efc9a8"/>
<path d="M943 472 L970 468 L976 478 L948 484 Z" fill="#dfe6ee"/>
<rect x="940" y="482" width="48" height="30" fill="#4d535b"/>
<rect x="952" y="489" width="21" height="15" fill="#e4e8ec"/>
<rect x="975" y="482" width="13" height="30" fill="#b07a3a"/>
<rect x="978" y="486" width="6" height="22" fill="#e8e0d0"/>
<path d="M886 494 Q886 491 889 491 H946 L951 495 V539.5 H890 L886 536 Z" fill="#1f7fd2"/><rect x="886" y="486" width="8" height="5" fill="#2a86d6"/><rect x="888" y="487" width="4" height="3" fill="#d8c23a"/><rect x="890" y="496" width="29" height="3.2" fill="#fff" opacity="0.85"/><rect x="890" y="501" width="34" height="3.2" fill="#fff" opacity="0.85"/><rect x="890" y="510" width="5" height="1" fill="#fff"/><rect x="890" y="514" width="43" height="0.9" fill="#d8e8f8"/><rect x="890" y="516" width="49" height="0.9" fill="#d8e8f8"/><rect x="890" y="518" width="48" height="0.9" fill="#d8e8f8"/><rect x="890" y="520" width="42" height="0.9" fill="#d8e8f8"/><rect x="890" y="524" width="45" height="0.9" fill="#d8e8f8"/><rect x="890" y="529" width="30" height="0.9" fill="#d8e8f8"/><rect x="1030" y="446" width="28" height="1" fill="#aaa"/><rect x="1060" y="446" width="41" height="1.2" fill="#555"/><path d="M1009 453 H1038 L1043 457 V497 H1009 Z" fill="#a9b58a"/>
<rect x="1009" y="453" width="34" height="10" fill="#8f9e62"/>
<rect x="1022" y="462" width="21" height="35" fill="#e6e8e6"/>
<path d="M1010 468 Q1016 458 1022 468 L1024 497 H1010 Z" fill="#2a5a8c"/>
<ellipse cx="1017" cy="465" rx="3.5" ry="4" fill="#3a3030"/>
<rect x="1026" y="480" width="11" height="14" fill="#2e3236"/>
<rect x="1038" y="460" width="5" height="37" fill="#c8ccd0"/>
<path d="M1043 465 H1096.5 V481 L1092 486 H1043 Z" fill="#1f7fd2"/><rect x="1048" y="471" width="40" height="1.2" fill="#fff"/><rect x="1048" y="474" width="42" height="2.5" fill="#fff" opacity="0.85"/><rect x="1048" y="480" width="24" height="0.9" fill="#cfe3f7"/><g opacity="0.6"><rect x="891.0" y="544.0" width="36.0" height="1.5" fill="#555"/><rect x="891.0" y="546.0" width="10.0" height="1.3" fill="#666"/><rect x="891.0" y="551.0" width="38.6" height="0.8" fill="#8c8c8c"/><rect x="891.0" y="552.5" width="37.5" height="0.8" fill="#8c8c8c"/><rect x="891.0" y="554.0" width="40.7" height="0.8" fill="#8c8c8c"/><rect x="891.0" y="557.0" width="37.0" height="0.8" fill="#8c8c8c"/><rect x="891.0" y="558.5" width="40.0" height="0.8" fill="#8c8c8c"/><rect x="891.0" y="560.0" width="38.9" height="0.8" fill="#8c8c8c"/><rect x="891.0" y="561.5" width="36.9" height="0.8" fill="#8c8c8c"/><rect x="891.0" y="563.0" width="39.8" height="0.8" fill="#8c8c8c"/><rect x="891.0" y="565.0" width="36.8" height="0.8" fill="#8c8c8c"/><rect x="891.0" y="566.5" width="39.3" height="0.8" fill="#8c8c8c"/><rect x="891.0" y="568.0" width="37.0" height="0.8" fill="#8c8c8c"/><rect x="891.0" y="569.5" width="37.1" height="0.8" fill="#8c8c8c"/><rect x="891.0" y="571.0" width="39.3" height="0.8" fill="#8c8c8c"/><rect x="891.0" y="572.5" width="41.9" height="0.8" fill="#8c8c8c"/><rect x="891.0" y="574.0" width="37.3" height="0.8" fill="#8c8c8c"/><rect x="891.0" y="577.0" width="38.0" height="0.8" fill="#8c8c8c"/><rect x="891.0" y="578.5" width="40.6" height="0.8" fill="#8c8c8c"/><rect x="891.0" y="580.0" width="42.7" height="0.8" fill="#8c8c8c"/><rect x="891.0" y="581.5" width="40.3" height="0.8" fill="#8c8c8c"/><rect x="891.0" y="583.0" width="39.1" height="0.8" fill="#8c8c8c"/><rect x="891.0" y="585.0" width="42.8" height="0.8" fill="#8c8c8c"/><rect x="891.0" y="586.5" width="36.9" height="0.8" fill="#8c8c8c"/><rect x="891.0" y="588.0" width="42.1" height="0.8" fill="#8c8c8c"/><rect x="891.0" y="589.5" width="38.4" height="0.8" fill="#8c8c8c"/><rect x="939.0" y="545.0" width="19.0" height="1.5" fill="#555"/><rect x="939.0" y="548.5" width="37.5" height="0.8" fill="#8c8c8c"/><rect x="939.0" y="550.0" width="37.3" height="0.8" fill="#8c8c8c"/><rect x="939.0" y="551.5" width="38.5" height="0.8" fill="#8c8c8c"/><rect x="939.0" y="553.0" width="41.8" height="0.8" fill="#8c8c8c"/><rect x="939.0" y="554.5" width="37.7" height="0.8" fill="#8c8c8c"/><rect x="939.0" y="556.0" width="40.3" height="0.8" fill="#8c8c8c"/><rect x="939.0" y="558.0" width="40.7" height="0.8" fill="#8c8c8c"/><rect x="939.0" y="559.5" width="39.0" height="0.8" fill="#8c8c8c"/><rect x="939.0" y="561.0" width="40.1" height="0.8" fill="#8c8c8c"/><rect x="939.0" y="563.0" width="37.0" height="0.8" fill="#8c8c8c"/><rect x="939.0" y="564.5" width="36.9" height="0.8" fill="#8c8c8c"/><rect x="939.0" y="566.0" width="37.9" height="0.8" fill="#8c8c8c"/><rect x="939.0" y="567.5" width="40.9" height="0.8" fill="#8c8c8c"/><rect x="939.0" y="569.0" width="39.3" height="0.8" fill="#8c8c8c"/><rect x="939.0" y="571.0" width="38.6" height="0.8" fill="#8c8c8c"/><rect x="939.0" y="572.5" width="40.3" height="0.8" fill="#8c8c8c"/><rect x="939.0" y="574.0" width="39.5" height="0.8" fill="#8c8c8c"/><rect x="939.0" y="575.5" width="38.5" height="0.8" fill="#8c8c8c"/><rect x="939.0" y="577.0" width="41.7" height="0.8" fill="#8c8c8c"/><rect x="939.0" y="578.5" width="41.1" height="0.8" fill="#8c8c8c"/><rect x="939.0" y="581.0" width="38.1" height="0.8" fill="#8c8c8c"/><rect x="939.0" y="582.5" width="40.3" height="0.8" fill="#8c8c8c"/><rect x="939.0" y="584.0" width="39.9" height="0.8" fill="#8c8c8c"/><rect x="939.0" y="585.5" width="42.2" height="0.8" fill="#8c8c8c"/><rect x="1004.0" y="500.5" width="16.0" height="1.5" fill="#555"/><rect x="1004.0" y="505.0" width="41.3" height="0.8" fill="#8c8c8c"/><rect x="1004.0" y="506.5" width="38.4" height="0.8" fill="#8c8c8c"/><rect x="1004.0" y="508.0" width="42.9" height="0.8" fill="#8c8c8c"/><rect x="1004.0" y="511.0" width="37.3" height="0.8" fill="#8c8c8c"/><rect x="1004.0" y="512.5" width="39.2" height="0.8" fill="#8c8c8c"/><rect x="1004.0" y="514.0" width="41.4" height="0.8" fill="#8c8c8c"/><rect x="1004.0" y="515.5" width="37.5" height="0.8" fill="#8c8c8c"/><rect x="1004.0" y="518.0" width="39.7" height="0.8" fill="#8c8c8c"/><rect x="1004.0" y="519.5" width="36.8" height="0.8" fill="#8c8c8c"/><rect x="1004.0" y="521.0" width="40.9" height="0.8" fill="#8c8c8c"/><rect x="1004.0" y="522.5" width="41.5" height="0.8" fill="#8c8c8c"/><rect x="1004.0" y="524.0" width="40.2" height="0.8" fill="#8c8c8c"/><rect x="1004.0" y="527.0" width="42.2" height="0.8" fill="#8c8c8c"/><rect x="1004.0" y="528.5" width="38.6" height="0.8" fill="#8c8c8c"/><rect x="1004.0" y="530.0" width="41.0" height="0.8" fill="#8c8c8c"/><rect x="1004.0" y="538.0" width="17.0" height="1.5" fill="#555"/><rect x="1004.0" y="542.0" width="40.4" height="0.8" fill="#8c8c8c"/><rect x="1004.0" y="543.5" width="40.3" height="0.8" fill="#8c8c8c"/><rect x="1004.0" y="546.0" width="39.5" height="0.8" fill="#8c8c8c"/><rect x="1004.0" y="547.5" width="42.0" height="0.8" fill="#8c8c8c"/><rect x="1004.0" y="549.0" width="42.6" height="0.8" fill="#8c8c8c"/><rect x="1004.0" y="550.5" width="39.6" height="0.8" fill="#8c8c8c"/><rect x="1004.0" y="553.0" width="40.8" height="0.8" fill="#8c8c8c"/><rect x="1004.0" y="554.5" width="36.9" height="0.8" fill="#8c8c8c"/><rect x="1004.0" y="556.0" width="41.1" height="0.8" fill="#8c8c8c"/><rect x="1004.0" y="557.5" width="40.7" height="0.8" fill="#8c8c8c"/><rect x="1004.0" y="560.0" width="43.0" height="0.8" fill="#8c8c8c"/><rect x="1004.0" y="561.5" width="41.9" height="0.8" fill="#8c8c8c"/><rect x="1004.0" y="563.0" width="38.4" height="0.8" fill="#8c8c8c"/><rect x="1004.0" y="564.5" width="39.0" height="0.8" fill="#8c8c8c"/><rect x="1004.0" y="567.0" width="40.9" height="0.8" fill="#8c8c8c"/><rect x="1004.0" y="568.5" width="36.7" height="0.8" fill="#8c8c8c"/><rect x="1004.0" y="570.0" width="39.5" height="0.8" fill="#8c8c8c"/><rect x="1052.0" y="500.5" width="12.0" height="1.5" fill="#555"/><rect x="1052.0" y="505.0" width="38.5" height="0.8" fill="#8c8c8c"/><rect x="1052.0" y="506.5" width="38.2" height="0.8" fill="#8c8c8c"/><rect x="1052.0" y="508.0" width="37.8" height="0.8" fill="#8c8c8c"/><rect x="1052.0" y="510.0" width="42.5" height="0.8" fill="#8c8c8c"/><rect x="1052.0" y="511.5" width="38.3" height="0.8" fill="#8c8c8c"/><rect x="1052.0" y="513.0" width="39.0" height="0.8" fill="#8c8c8c"/><rect x="1052.0" y="514.5" width="40.0" height="0.8" fill="#8c8c8c"/><rect x="1052.0" y="516.0" width="43.2" height="0.8" fill="#8c8c8c"/><rect x="1052.0" y="517.5" width="37.9" height="0.8" fill="#8c8c8c"/><rect x="1052.0" y="520.0" width="40.4" height="0.8" fill="#8c8c8c"/><rect x="1052.0" y="521.5" width="41.0" height="0.8" fill="#8c8c8c"/><rect x="1052.0" y="529.5" width="22.0" height="1.5" fill="#555"/><rect x="1052.0" y="534.0" width="43.2" height="0.8" fill="#8c8c8c"/><rect x="1052.0" y="535.5" width="42.8" height="0.8" fill="#8c8c8c"/><rect x="1052.0" y="537.0" width="43.1" height="0.8" fill="#8c8c8c"/><rect x="1052.0" y="538.5" width="39.2" height="0.8" fill="#8c8c8c"/><rect x="1052.0" y="541.0" width="40.1" height="0.8" fill="#8c8c8c"/><rect x="1052.0" y="542.5" width="39.8" height="0.8" fill="#8c8c8c"/><rect x="1052.0" y="544.0" width="43.2" height="0.8" fill="#8c8c8c"/><rect x="1052.0" y="545.5" width="43.7" height="0.8" fill="#8c8c8c"/><rect x="1052.0" y="548.0" width="38.4" height="0.8" fill="#8c8c8c"/><rect x="1052.0" y="549.5" width="38.6" height="0.8" fill="#8c8c8c"/><rect x="1052.0" y="551.0" width="38.9" height="0.8" fill="#8c8c8c"/><rect x="1052.0" y="554.0" width="38.9" height="0.8" fill="#8c8c8c"/><rect x="1052.0" y="555.5" width="40.6" height="0.8" fill="#8c8c8c"/><rect x="1052.0" y="557.0" width="41.3" height="0.8" fill="#8c8c8c"/><rect x="1052.0" y="558.5" width="39.1" height="0.8" fill="#8c8c8c"/><rect x="1052.0" y="560.0" width="37.4" height="0.8" fill="#8c8c8c"/><rect x="1052.0" y="562.0" width="40.2" height="0.8" fill="#8c8c8c"/><rect x="1052.0" y="563.5" width="39.8" height="0.8" fill="#8c8c8c"/><rect x="1052.0" y="565.0" width="41.1" height="0.8" fill="#8c8c8c"/><rect x="1052.0" y="566.5" width="43.7" height="0.8" fill="#8c8c8c"/><rect x="1052.0" y="569.0" width="42.0" height="0.8" fill="#8c8c8c"/><rect x="1052.0" y="570.5" width="40.8" height="0.8" fill="#8c8c8c"/><rect x="1052.0" y="572.0" width="41.5" height="0.8" fill="#8c8c8c"/><rect x="1052.0" y="575.0" width="41.9" height="0.8" fill="#8c8c8c"/></g><rect x="1093" y="582" width="2.5" height="10" fill="#1c2c44"/><rect x="1091.5" y="582" width="5.5" height="1.2" fill="#1c2c44"/><rect x="1091.5" y="591" width="5.5" height="1.2" fill="#1c2c44"/><rect x="1075" y="589" width="16" height="1" fill="#6c90b8"/><rect x="1078" y="591.5" width="14" height="1" fill="#6c90b8"/></svg>
<svg class="a" style="left:863px;top:630px" width="80" height="12" viewBox="0 0 80 12">
<rect x="0.5" y="1" width="1.6" height="9" fill="#3a3f45"/><path d="M9 1 V10 L2.5 5.5Z" fill="#3a3f45"/>
<path d="M31 1.5 V9.5 L24.5 5.5Z" fill="#3a3f45"/>
<path d="M48 1.5 V9.5 L54.5 5.5Z" fill="#3a3f45"/>
<path d="M71 1 V10 L77.5 5.5Z" fill="#3a3f45"/><rect x="77.4" y="1" width="1.6" height="9" fill="#3a3f45"/>
</svg>
<div class="a" style="left:958px;top:624px;width:100px;height:21px;border:1px solid #8f8f8f;background:#fff"></div>
<div class="t" style="left:963px;top:628px;color:#222">4</div>
<div class="t" style="left:1066px;top:628px;color:#333">/ 40</div>
<svg class="a" style="left:1100px;top:630px" width="12" height="12" viewBox="0 0 12 12"><circle cx="6" cy="6" r="5" fill="#30353a"/><rect x="5.3" y="5" width="1.5" height="3.8" fill="#fff"/><rect x="4.6" y="8" width="2.9" height="0.9" fill="#fff"/><rect x="5.3" y="2.8" width="1.5" height="1.4" fill="#fff"/></svg>
<svg class="a" style="left:1126px;top:630px" width="12" height="12" viewBox="0 0 12 12"><g fill="#30353a"><path d="M0.5 0.5 H4.5 L0.5 4.5Z"/><path d="M11.5 0.5 V4.5 L7.5 0.5Z"/><path d="M11.5 11.5 H7.5 L11.5 7.5Z"/><path d="M0.5 11.5 V7.5 L4.5 11.5Z"/></g><path d="M2 2 L4.5 4.5 M10 2 L7.5 4.5 M10 10 L7.5 7.5 M2 10 L4.5 7.5" stroke="#30353a" stroke-width="1.3"/></svg>
<div class="a" style="left:789px;top:655px;width:410px;height:50px;background:#f1f1f2"></div>
<div class="t" style="left:801px;top:663px;color:#333;letter-spacing:-0.264px">Seiten:</div>
<div class="t" style="left:883px;top:662px;color:#333">40</div>
<div class="t" style="left:904px;top:662px;color:#333">(</div>
<svg class="a" style="left:913px;top:663px" width="12" height="13" viewBox="0 0 12 13"><path d="M0.5 0.5H7.5L10.5 3.5V12.5H0.5Z" fill="#f6f2f3" stroke="#7a7a7a"/><path d="M7.5 0.5V3.5H10.5" fill="none" stroke="#999"/><path d="M2.5 6.5H8.5M2.5 8.5H8.5M2.5 10.5H8.5" stroke="#d9a9b5" stroke-width="0.8"/></svg>
<div class="t" style="left:927px;top:662px;color:#333">40</div>
<svg class="a" style="left:950px;top:663px" width="12" height="13" viewBox="0 0 12 13"><path d="M0.5 0.5H7.5L10.5 3.5V12.5H0.5Z" fill="#f3f3f3" stroke="#7a7a7a"/><path d="M7.5 0.5V3.5H10.5" fill="none" stroke="#999"/><path d="M2.5 6.5H8.5M2.5 8.5H8.5M2.5 10.5H8.5" stroke="#999" stroke-width="0.8"/></svg>
<div class="t" style="left:963px;top:662px;color:#333">0</div>
<svg class="a" style="left:980px;top:663px" width="11" height="13" viewBox="0 0 11 13"><rect x="0.5" y="0.5" width="9.5" height="12" fill="#dfe1e4" stroke="#808080"/></svg>
<div class="t" style="left:994px;top:662px;color:#333">0</div>
<div class="t" style="left:1004px;top:662px;color:#333">)</div>
<svg class="a" style="left:1018px;top:663px" width="12" height="13" viewBox="0 0 12 13"><path d="M0.5 0.5H10.5V9L7.5 12.5H0.5Z" fill="#fff" stroke="#6a6a6a"/><path d="M10.5 1 V4" stroke="#555"/></svg>
<div class="t" style="left:1032px;top:662px;color:#333">0</div>
<svg class="a" style="left:1048px;top:663px" width="11" height="13" viewBox="0 0 11 13"><rect x="0.5" y="0.5" width="10" height="12" fill="#f3f3f3" stroke="#888"/><path d="M1.5 12 L10 2 M1 8 L6 2" stroke="#e9a0a0" stroke-width="0.9"/></svg>
<div class="t" style="left:1062px;top:662px;color:#333">0</div>
<div class="t" style="left:801px;top:685px;color:#333;letter-spacing:-0.202px">Seitengröße(n):</div>
<div class="t" style="left:884px;top:685px;color:#333;letter-spacing:-0.12px">A4 (210mm×297mm)</div>

<!-- status bar -->
<div class="a" style="left:0;top:705px;width:1200px;height:23px;background:#f1f1f1;border-top:1px solid #bfc3c9"></div>
<div class="a" style="left:0;top:726px;width:1200px;height:2px;background:#7d8a8a;z-index:51"></div>
<div class="a" style="left:163px;top:706px;width:1px;height:21px;background:#d3d5d9"></div>
<div class="a" style="left:298px;top:706px;width:1px;height:21px;background:#d3d5d9"></div>
<div class="t" style="left:10px;top:709px;color:#333;letter-spacing:-0.043px">Aufträge in der Auftragsliste: 5</div>
<div class="t" style="left:173px;top:709px;color:#333;letter-spacing:-0.098px">Ausgewählte Aufträge: 1</div>
<div class="a" style="left:1183px;top:706px;width:1px;height:21px;background:#dcdde0"></div>
<svg class="a" style="left:1187px;top:715px" width="10" height="10" viewBox="0 0 10 10"><g fill="#b5b5b5"><rect x="7" y="1" width="1.5" height="1.5"/><rect x="4" y="4" width="1.5" height="1.5"/><rect x="7" y="4" width="1.5" height="1.5"/><rect x="1" y="7" width="1.5" height="1.5"/><rect x="4" y="7" width="1.5" height="1.5"/><rect x="7" y="7" width="1.5" height="1.5"/></g></svg>
<div class="a" style="left:1197px;top:149px;width:1px;height:556px;background:#b9bdc3"></div>
</body></html>
